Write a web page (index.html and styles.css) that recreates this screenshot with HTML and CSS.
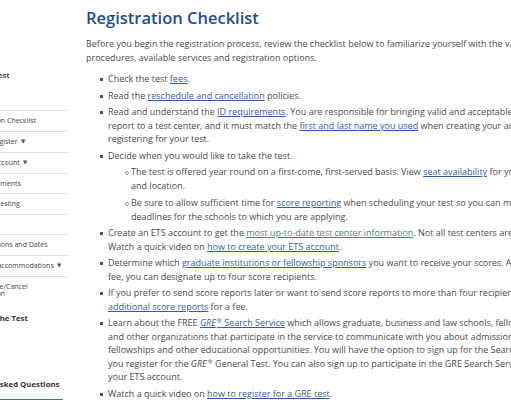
FILE: index.html
```html
<!DOCTYPE html>
<html lang="en">
<head>
<meta charset="utf-8">
<title>Registration Checklist</title>
<link rel="stylesheet" href="styles.css">
</head>
<body>
<div class="page">
  <nav class="sidenav">
    <div class="nav-head nav-top">GRE General Test</div>
    <ul class="nav-links">
      <li><a href="#">Registration Checklist</a></li>
      <li><a href="#">How to Register <span class="caret">&#9660;</span></a></li>
      <li><a href="#">The ETS Account <span class="caret">&#9660;</span></a></li>
      <li><a href="#">ID Requirements</a></li>
      <li><a href="#">At Home Testing</a></li>
      <li><a href="#">Fees</a></li>
      <li><a href="#">Test Locations and Dates</a></li>
      <li><a href="#">Disability accommodations <span class="caret">&#9660;</span></a></li>
      <li><a href="#">Reschedule/Cancel Registration</a></li>
    </ul>
    <div class="nav-sections">
      <div class="nav-head">Prepare for the Test</div>
      <div class="nav-head">Test Day</div>
      <div class="nav-head">Scores</div>
      <div class="nav-head">Frequently Asked Questions</div>
    </div>
    <div class="nav-rule"></div>
  </nav>

  <main class="content">
    <h1 class="title">Registration Checklist</h1>
    <p class="intro">Before you begin the registration process, review the checklist below to familiarize yourself with the various registration procedures, available services and registration options.</p>
    <ul class="checklist">
      <li>Check the test <a href="#">fees</a>.</li>
      <li>Read the <a href="#">reschedule and cancellation</a> policies.</li>
      <li>Read and understand the <a href="#">ID requirements</a>. You are responsible for bringing valid and acceptable ID when you report to a test center, and it must match the <a href="#">first and last name you used</a> when creating your account and registering for your test.</li>
      <li>Decide when you would like to take the test.
        <ul class="sublist">
          <li>The test is offered year round on a first-come, first-served basis. View <a href="#">seat availability</a> for your desired date and location.</li>
          <li>Be sure to allow sufficient time for <a href="#">score reporting</a> when scheduling your test so you can meet application deadlines for the schools to which you are applying.</li>
        </ul>
      </li>
      <li>Create an ETS account to get the <a href="#" class="visited">most up-to-date test center information</a>. Not all test centers are open every day. Watch a quick video on <a href="#">how to create your ETS account</a>.</li>
      <li>Determine which <a href="#">graduate institutions or fellowship sponsors</a> you want to receive your scores. As part of your test fee, you can designate up to four score recipients.</li>
      <li>If you prefer to send score reports later or want to send score reports to more than four recipients, you can order <a href="#">additional score reports</a> for a fee.</li>
      <li>Learn about the FREE <a href="#"><i>GRE</i><sup>&reg;</sup> Search Service</a> which allows graduate, business and law schools, fellowship sponsors and other organizations that participate in the service to communicate with you about admissions, grants and fellowships and other educational opportunities. You will have the option to sign up for the Search Service when you register for the <i>GRE</i><sup>&reg;</sup> General Test. You can also sign up to participate in the GRE Search Service from within your ETS account.</li>
      <li>Watch a quick video on <a href="#">how to register for a GRE test</a>.</li>
    </ul>
  </main>
</div>
</body>
</html>
```
FILE: styles.css
```css
html, body {
  margin: 0;
  padding: 0;
  overflow: hidden;
  background: #ffffff;
}

body {
  width: 511px;
  height: 400px;
  font-family: "Open Sans", "Noto Sans", sans-serif;
  color: #4a4a4a;
}

.page {
  display: flex;
  align-items: flex-start;
}

/* ---------- side navigation ---------- */
.sidenav {
  flex: 0 0 118px;
  margin-left: -50px;
  padding-top: 70px;
  color: #444;
}

.nav-head {
  font-size: 7.8px;
  line-height: 10px;
  font-weight: 700;
  color: #333;
  white-space: nowrap;
}

.nav-top {
  margin-left: -5px;
  font-weight: 600;
}

.nav-links {
  list-style: none;
  margin: 30px 0 0;
  padding: 0;
  border-top: 1px solid #dedede;
}

.nav-links li {
  border-bottom: 1px solid #dedede;
}

.nav-links li:last-child {
  border-bottom: none;
}

.nav-links a {
  display: block;
  padding: 6px 0 6.5px 16px;
  font-size: 7px;
  line-height: 7px;
  color: #444;
  text-decoration: none;
}

.caret {
  font-family: "DejaVu Sans", sans-serif;
  font-size: 5.5px;
  margin-left: 1.5px;
  vertical-align: 0.5px;
  color: #555;
}

.nav-sections {
  display: flex;
  flex-direction: column;
  gap: 12.3px;
  margin-top: 9.5px;
}

.nav-rule {
  margin-top: 10px;
  margin-right: 5px;
  height: 1.5px;
  background: #3c6bc1;
}

/* ---------- main content ---------- */
.content {
  flex: 0 0 501px;
  margin-left: 18px;
  padding-top: 6.7px;
}

.title {
  margin: 0;
  font-size: 16.5px;
  line-height: 21px;
  font-weight: 600;
  color: #1d4e91;
}

.intro {
  margin: 9.8px 0 6.8px;
  font-size: 9px;
  line-height: 14px;
}

.checklist,
.sublist {
  list-style: none;
  margin: 0;
  font-size: 9px;
  line-height: 13.5px;
}

.checklist {
  padding-left: 22px;
}

.checklist > li {
  position: relative;
  margin-bottom: 3px;
}

.checklist > li::before {
  content: "";
  position: absolute;
  left: -8.5px;
  top: 6px;
  width: 3px;
  height: 3px;
  background: #555;
}

.sublist {
  margin-top: 3px;
  padding-left: 23px;
}

.sublist > li {
  position: relative;
  margin-bottom: 4px;
}

.sublist > li:last-child {
  margin-bottom: 3px;
}

.sublist > li::before {
  content: "";
  position: absolute;
  left: -6.5px;
  top: 5.5px;
  width: 2.6px;
  height: 2.6px;
  border: 0.7px solid #999;
  border-radius: 50%;
}

a {
  color: #2e5ca6;
  text-decoration: underline;
  text-underline-offset: 1px;
}

a.visited {
  color: #3b8c6e;
}

sup {
  font-size: 6px;
  line-height: 0;
  vertical-align: 3px;
  margin-left: 1px;
}
```
